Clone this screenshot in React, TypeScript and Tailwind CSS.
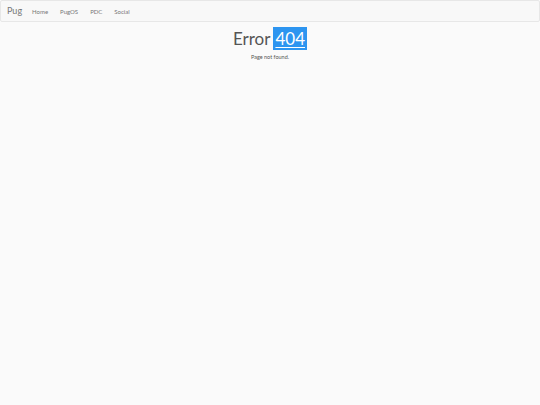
export default function App() {
  return (
    <div className="min-h-screen bg-[#fafafa]" style={{ fontFamily: 'Lato, "DejaVu Sans", sans-serif' }}>
      <nav className="h-[22px] bg-[#f8f8f8] border border-[#e7e7e7] rounded-[2px] flex items-center">
        <span className="pl-[6px] pr-[6px] text-[9px] text-[#777]">Pug</span>
        <div className="flex items-center gap-[12px] pl-[4px] text-[6px] text-[#777]">
          <span>Home</span>
          <span>PugOS</span>
          <span>PDC</span>
          <span>Social</span>
        </div>
      </nav>
      <div className="flex flex-col items-center pt-[5px]">
        <div className="flex items-center gap-[3px]">
          <span className="text-[17px] text-[#555] leading-none">Error</span>
          <span className="bg-[#2d95f0] text-white text-[17px] leading-none px-[2px] py-[3px] underline underline-offset-[2px] decoration-[1px]">404</span>
        </div>
        <div className="text-[5.5px] text-[#555] mt-[3px]">Page not found.</div>
      </div>
    </div>
  );
}
